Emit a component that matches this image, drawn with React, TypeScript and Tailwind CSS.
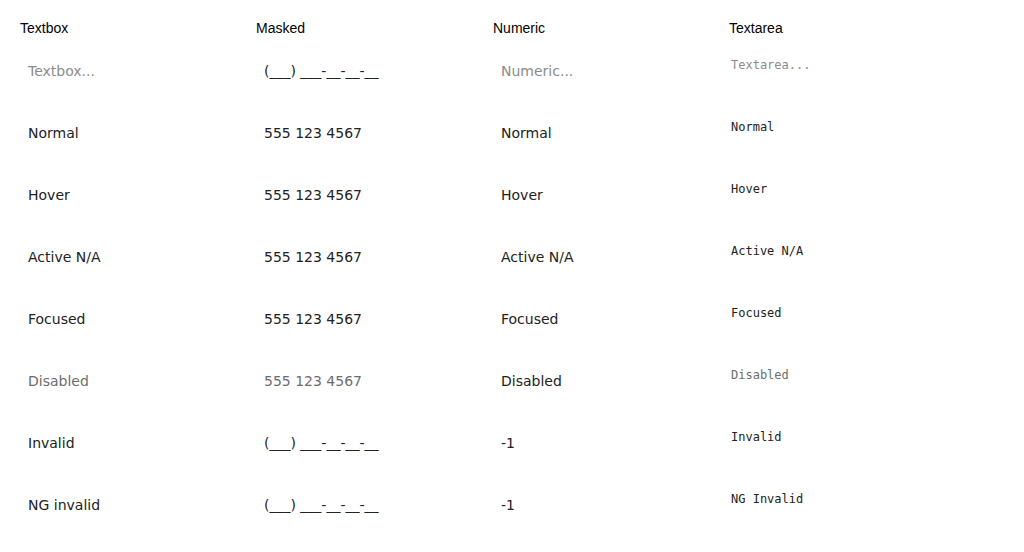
import React from "react";

type Cell = { t: string; c: "ph" | "n" | "d" };

const textbox: Cell[] = [
  { t: "Textbox...", c: "ph" },
  { t: "Normal", c: "n" },
  { t: "Hover", c: "n" },
  { t: "Active N/A", c: "n" },
  { t: "Focused", c: "n" },
  { t: "Disabled", c: "d" },
  { t: "Invalid", c: "n" },
  { t: "NG invalid", c: "n" },
];
const masked: Cell[] = [
  { t: "(___) ___-__-__-__", c: "n" },
  { t: "555 123 4567", c: "n" },
  { t: "555 123 4567", c: "n" },
  { t: "555 123 4567", c: "n" },
  { t: "555 123 4567", c: "n" },
  { t: "555 123 4567", c: "d" },
  { t: "(___) ___-__-__-__", c: "n" },
  { t: "(___) ___-__-__-__", c: "n" },
];
const numeric: Cell[] = [
  { t: "Numeric...", c: "ph" },
  { t: "Normal", c: "n" },
  { t: "Hover", c: "n" },
  { t: "Active N/A", c: "n" },
  { t: "Focused", c: "n" },
  { t: "Disabled", c: "n" },
  { t: "-1", c: "n" },
  { t: "-1", c: "n" },
];
const textarea: Cell[] = [
  { t: "Textarea...", c: "ph" },
  { t: "Normal", c: "n" },
  { t: "Hover", c: "n" },
  { t: "Active N/A", c: "n" },
  { t: "Focused", c: "n" },
  { t: "Disabled", c: "d" },
  { t: "Invalid", c: "n" },
  { t: "NG Invalid", c: "n" },
];

function color(c: Cell["c"]) {
  if (c === "ph") return "text-[#8c8c8c]";
  if (c === "d") return "text-[#6d6d6d]";
  return "text-[#222222]";
}

function Column({ title, cells, mono }: { title: string; cells: Cell[]; mono?: boolean }) {
  return (
    <div className="flex flex-col">
      <div className="h-[22px] leading-[20px] text-[14px] text-black font-['Liberation_Sans',Arial,sans-serif]">
        {title}
      </div>
      {cells.map((cell, i) =>
        mono ? (
          <div
            key={i}
            className={`h-[62px] pt-[18px] pl-[2px] leading-[14px] text-[12px] font-['DejaVu_Sans_Mono',monospace] whitespace-pre ${color(cell.c)}`}
          >
            {cell.t}
          </div>
        ) : (
          <div
            key={i}
            className={`h-[62px] pt-[22px] pl-[8px] leading-[18px] text-[14px] font-['DejaVu_Sans',sans-serif] whitespace-pre ${color(cell.c)}`}
          >
            {cell.t}
          </div>
        )
      )}
    </div>
  );
}

export default function App() {
  return (
    <div className="w-[1024px] h-[552px] bg-white pl-[20px] pt-[18px] overflow-hidden">
      <div className="grid grid-cols-[236px_237px_236px_236px]">
        <Column title="Textbox" cells={textbox} />
        <Column title="Masked" cells={masked} />
        <Column title="Numeric" cells={numeric} />
        <Column title="Textarea" cells={textarea} mono />
      </div>
    </div>
  );
}
